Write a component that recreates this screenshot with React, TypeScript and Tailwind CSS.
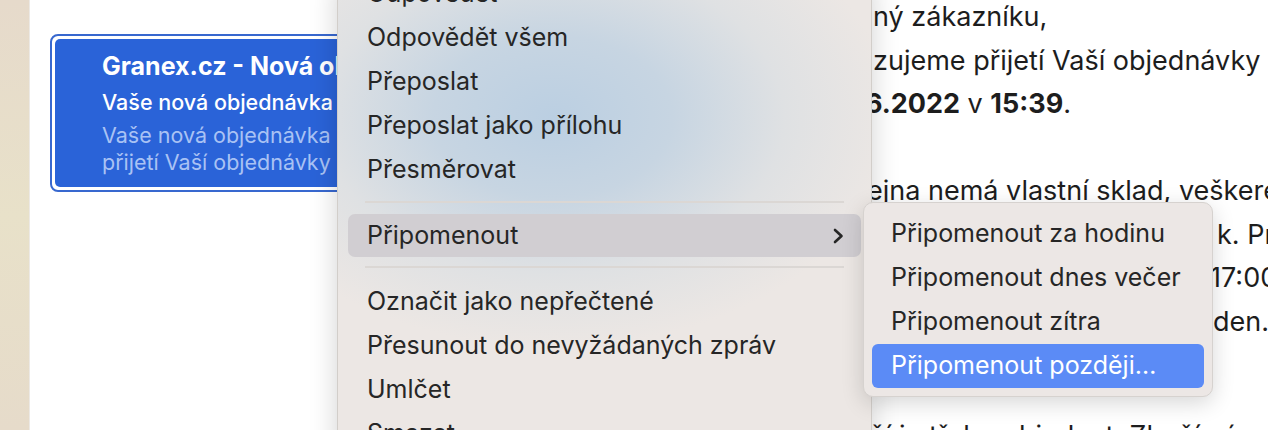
import React from "react";

function Chevron() {
  return (
    <svg width="12" height="18" viewBox="0 0 12 18" fill="none">
      <path d="M3 3 L9.5 9 L3 15" stroke="#262626" strokeWidth="2.6" strokeLinecap="round" strokeLinejoin="round" />
    </svg>
  );
}

function MenuItem({ children }: { children: React.ReactNode }) {
  return (
    <div className="h-[44px] flex items-center pl-[19px] text-[25px] text-[#262626] whitespace-nowrap">
      {children}
    </div>
  );
}

function Sep({ h }: { h: string }) {
  return (
    <div className={`${h} pt-[9px]`}>
      <div className="mx-[17px] h-[2px] bg-[#dbd7d4]" />
    </div>
  );
}

export default function App() {
  return (
    <div className="relative w-[1268px] h-[430px] overflow-hidden bg-white flex font-[Inter,'Noto_Sans',sans-serif]">
      {/* sidebar */}
      <div className="w-[30px] shrink-0 h-full bg-gradient-to-b from-[#e6dacb] via-[#e8e1c9] to-[#e6dbca] border-r border-[#ece9e5]" />

      {/* message list */}
      <div className="w-[307px] shrink-0 h-full bg-white">
        <div className="mt-[34px] ml-[20px] w-[420px] rounded-[8px] border-2 border-[#3868cf] p-[3px] bg-white">
          <div className="h-[148px] rounded-[5px] bg-[#2a63d8] pl-[47px] pt-[12px] whitespace-nowrap">
            <div className="text-[25px] leading-[30px] font-bold text-white">Granex.cz - Nová objednávka</div>
            <div className="mt-[8px] text-[21.5px] leading-[26px] font-medium text-white">Vaše nová objednávka</div>
            <div className="mt-[7px] text-[21.5px] leading-[27px] text-[#a9c2f4]">
              <div>Vaše nová objednávka</div>
              <div>přijetí Vaší objednávky z</div>
            </div>
          </div>
        </div>
      </div>

      {/* email body */}
      <div className="flex-1 h-full border-l border-[#dcdcdc]">
        <div className="pl-[535px] mt-[-5px] text-[27px] leading-[43.5px] text-[#1d1d1d] whitespace-nowrap">
          <div>ný zákazníku,</div>
          <div>zujeme přijetí Vaší objednávky</div>
          <div className="ml-[-8px]">
            <b>6.2022</b> v <b>15:39</b>.
          </div>
          <div>&nbsp;</div>
          <div className="ml-[-6px]">ejna nemá vlastní sklad, veškeré</div>
          <div className="ml-[344px]">k. Pr</div>
          <div className="ml-[337px]">17:00</div>
          <div className="ml-[340px]">den.</div>
          <div className="mt-[71px] ml-[-3px]">ží je třeba objednat. Zboží vám zašleme</div>
        </div>
      </div>

      {/* context menu */}
      <div className="absolute left-[337px] top-[-29px] w-[535px] h-[480px] rounded-[10px] border border-[#d2ceca] shadow-[0_8px_28px_rgba(0,0,0,0.18)] bg-[radial-gradient(ellipse_340px_230px_at_215px_145px,#bbcfe2_0%,#c7d5e2_35%,#dfe1e3_68%,#ece7e4_100%)] px-[10px]">
        <MenuItem>Odpovědět</MenuItem>
        <MenuItem>Odpovědět všem</MenuItem>
        <MenuItem>Přeposlat</MenuItem>
        <MenuItem>Přeposlat jako přílohu</MenuItem>
        <MenuItem>Přesměrovat</MenuItem>
        <Sep h="h-[22px]" />
        <div className="h-[43px] rounded-[7px] bg-[#d1ced2] flex items-center justify-between pl-[19px] pr-[17px] text-[25px] text-[#262626]">
          <span>Připomenout</span>
          <Chevron />
        </div>
        <Sep h="h-[23px]" />
        <MenuItem>Označit jako nepřečtené</MenuItem>
        <MenuItem>Přesunout do nevyžádaných zpráv</MenuItem>
        <MenuItem>Umlčet</MenuItem>
        <MenuItem>Smazat</MenuItem>
      </div>

      {/* submenu */}
      <div className="absolute left-[863px] top-[202px] w-[350px] h-[195px] rounded-[10px] border border-[#d6d2cf] bg-[#ece7e5] shadow-[0_6px_22px_rgba(0,0,0,0.16)] pt-[9px] px-[8px]">
        <MenuItem>Připomenout za hodinu</MenuItem>
        <MenuItem>Připomenout dnes večer</MenuItem>
        <MenuItem>Připomenout zítra</MenuItem>
        <div className="h-[44px] rounded-[6px] bg-[#5b8bf6] flex items-center pl-[19px] text-[25px] text-white whitespace-nowrap">
          Připomenout později…
        </div>
      </div>
    </div>
  );
}
